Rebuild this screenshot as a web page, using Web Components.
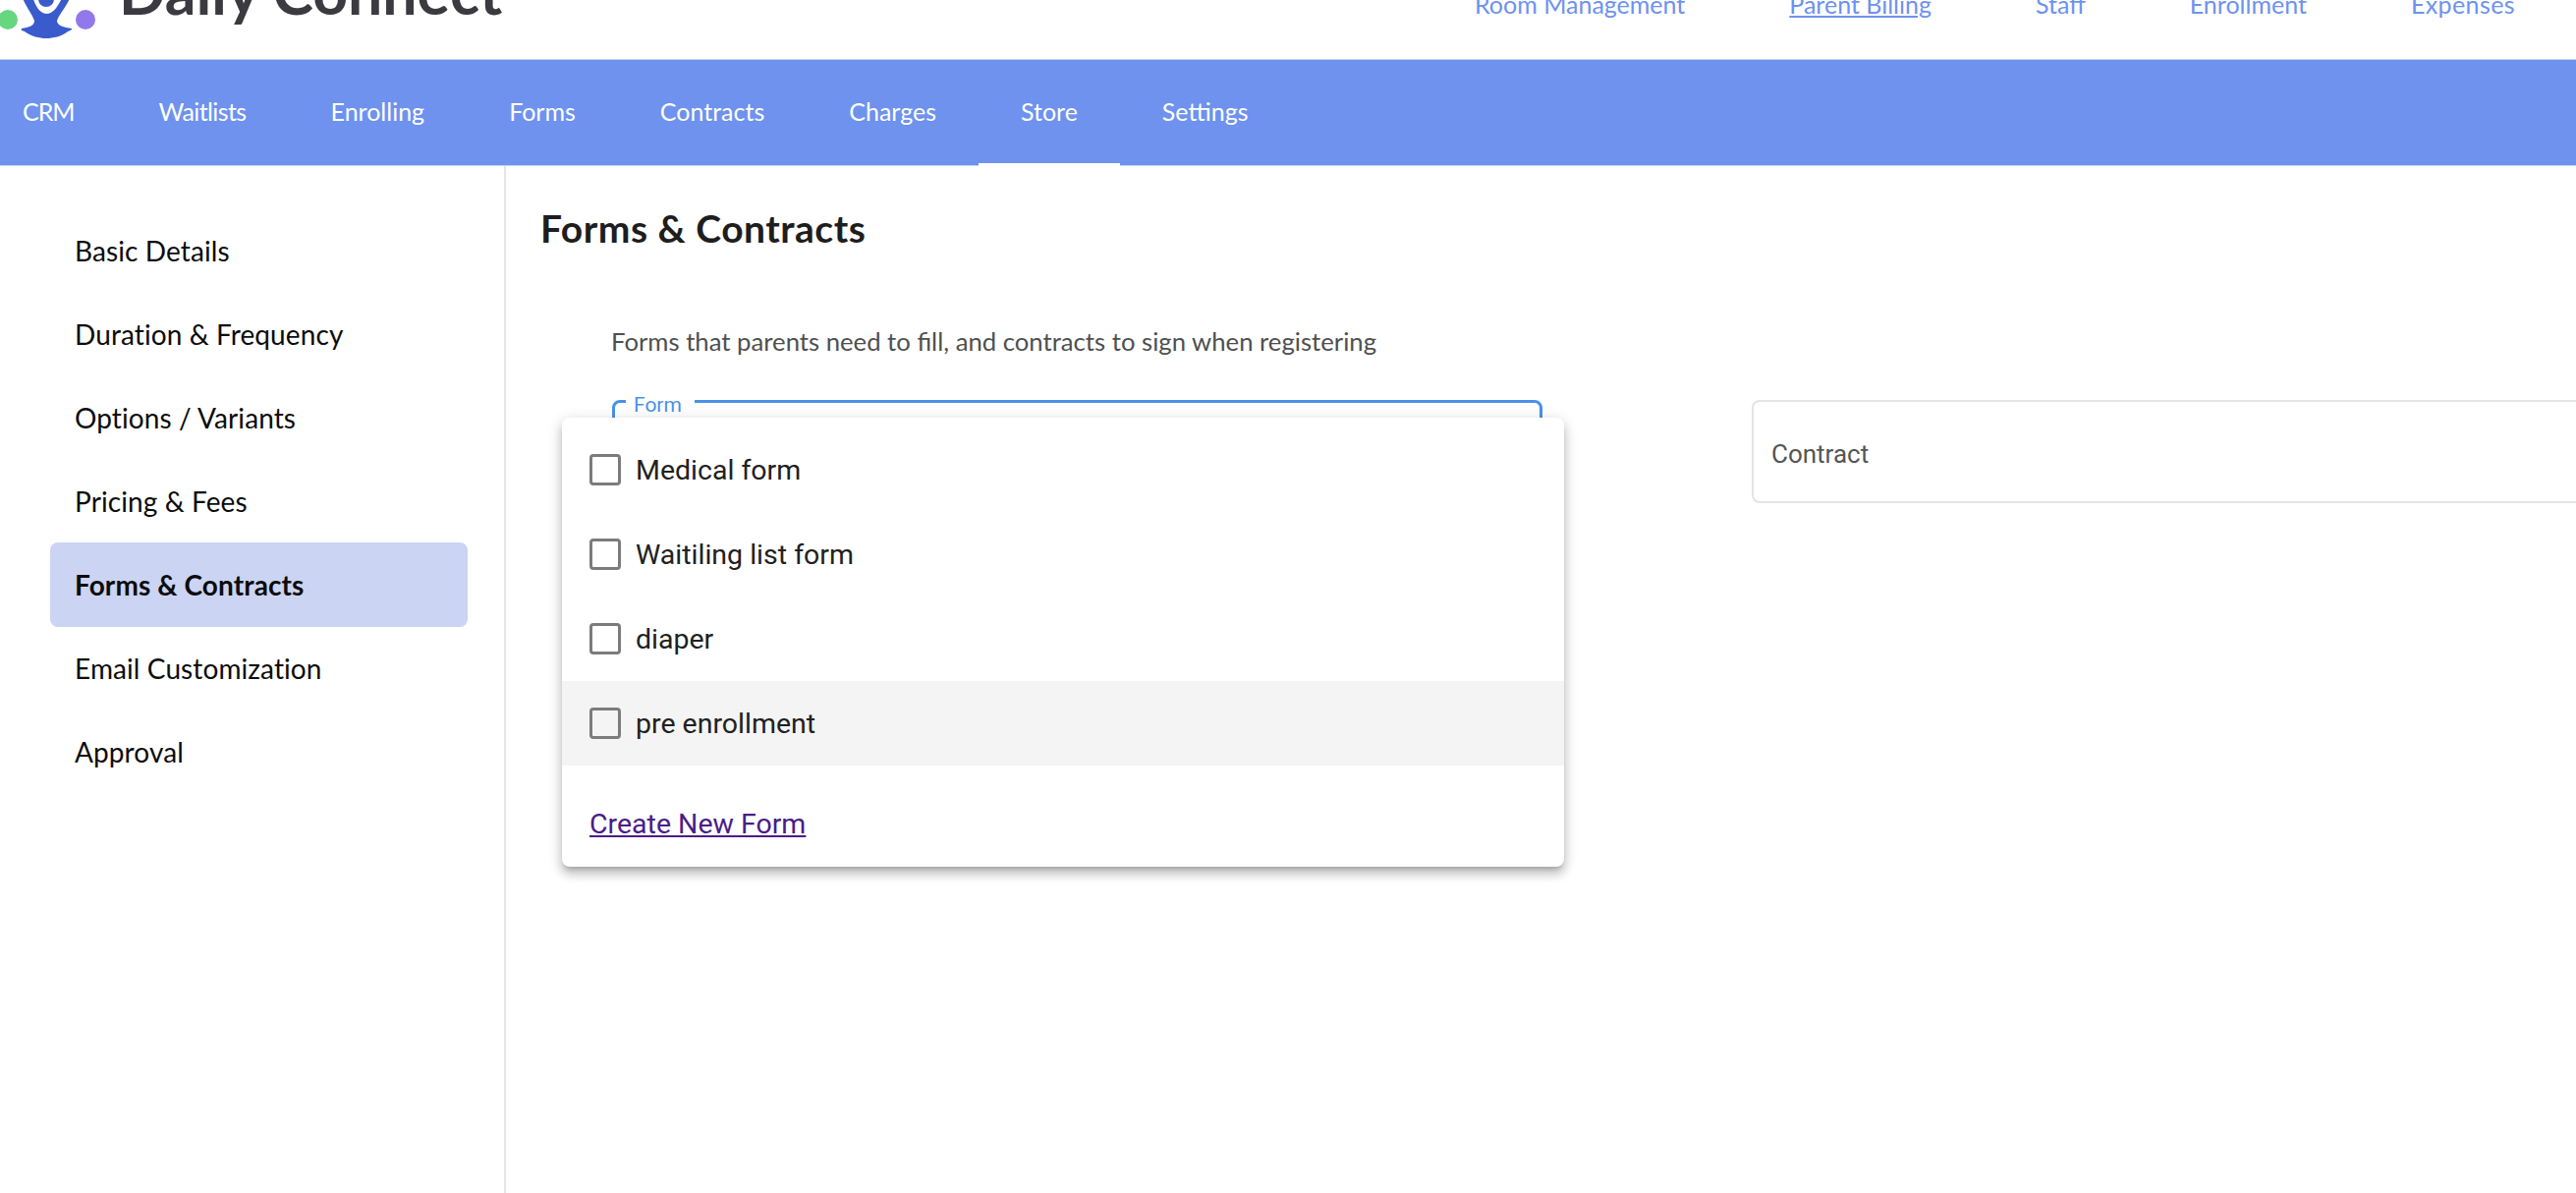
<!DOCTYPE html>
<html lang="en">
<head>
<meta charset="utf-8">
<title>Daily Connect</title>
<style>
  html, body { margin: 0; height: 100%; background: #fff; overflow: hidden; }
  body { font-family: Lato, "Open Sans", sans-serif; display: flex; flex-direction: column; }
</style>
</head>
<body>
<dc-header>
  <dc-top-link>Room Management</dc-top-link>
  <dc-top-link active>Parent Billing</dc-top-link>
  <dc-top-link>Staff</dc-top-link>
  <dc-top-link>Enrollment</dc-top-link>
  <dc-top-link style="letter-spacing: .4px">Expenses</dc-top-link>
</dc-header>
<dc-nav>
  <dc-nav-item style="letter-spacing: -1px">CRM</dc-nav-item>
  <dc-nav-item style="letter-spacing: -.6px">Waitlists</dc-nav-item>
  <dc-nav-item>Enrolling</dc-nav-item>
  <dc-nav-item>Forms</dc-nav-item>
  <dc-nav-item>Contracts</dc-nav-item>
  <dc-nav-item>Charges</dc-nav-item>
  <dc-nav-item active>Store</dc-nav-item>
  <dc-nav-item>Settings</dc-nav-item>
</dc-nav>
<dc-layout>
  <dc-side-menu slot="side">
    <dc-side-item>Basic Details</dc-side-item>
    <dc-side-item>Duration &amp; Frequency</dc-side-item>
    <dc-side-item>Options / Variants</dc-side-item>
    <dc-side-item>Pricing &amp; Fees</dc-side-item>
    <dc-side-item active>Forms &amp; Contracts</dc-side-item>
    <dc-side-item>Email Customization</dc-side-item>
    <dc-side-item>Approval</dc-side-item>
  </dc-side-menu>
  <dc-forms-page heading="Forms &amp; Contracts" description="Forms that parents need to fill, and contracts to sign when registering">
    <dc-select-field label="Form">
      <dc-dropdown link="Create New Form">
        <dc-check-row>Medical form</dc-check-row>
        <dc-check-row>Waitiling list form</dc-check-row>
        <dc-check-row>diaper</dc-check-row>
        <dc-check-row hover>pre enrollment</dc-check-row>
      </dc-dropdown>
    </dc-select-field>
    <dc-contract-field>Contract</dc-contract-field>
  </dc-forms-page>
</dc-layout>

<script>
(function () {
  function define(name, css, html) {
    class El extends HTMLElement {
      constructor() {
        super();
        this.attachShadow({ mode: 'open' });
        const body = typeof html === 'function' ? html(this) : html;
        this.shadowRoot.innerHTML = `<style>${css}</style>${body}`;
      }
    }
    customElements.define(name, El);
  }

  define('dc-header', `
    :host { display: flex; height: 60px; flex: none; overflow: hidden; align-items: flex-end; background: #fff; }
    svg { flex: none; display: block; }
    .brand {
      margin: 0 0 38px 24px;
      font-size: 62.5px;
      line-height: 1;
      font-weight: 700;
      color: #3a3a40;
      white-space: nowrap;
    }
    .links { margin-left: auto; display: flex; gap: 106px; padding: 0 62px 41px 0; }
  `, `
    <svg width="97" height="60" viewBox="0 0 97 60">
      <circle cx="8" cy="20" r="10" fill="#66d67f"/>
      <circle cx="87" cy="20" r="10" fill="#9378ec"/>
      <path d="M22 -4 C27 8 33 15 35 21 C35 26 30 28 22 29 C21 31 23 31 25 32 C32 37 40 39 47 39 C54 39 63 37 69 32 C71 31 74 30 73 29 C65 28 58 26 58 21 C60 15 67 8 72 -4 Z" fill="#3a5bcc"/>
      <path d="M33 -4 C36 7 41 14 47.5 14 C54 14 59 7 64 -4 Z" fill="#fff"/>
      <circle cx="47" cy="-1" r="8" fill="#3a5bcc"/>
    </svg>
    <div class="brand">Daily Connect</div>
    <div class="links"><slot></slot></div>
  `);

  define('dc-top-link', `
    :host { display: block; font-size: 25px; line-height: 30px; color: #6e92ee; white-space: nowrap; }
    :host([active]) { text-decoration: underline; }
  `, `<slot></slot>`);

  define('dc-nav', `
    :host {
      display: flex;
      flex: none;
      height: 109px;
      box-sizing: border-box;
      background: #6e92ee;
      border-top: 1px solid #c3d1f7;
      border-bottom: 1px solid #c3d1f7;
    }
    .items { display: flex; margin-left: -20px; height: 109px; margin-top: -1px; }
  `, `<div class="items"><slot></slot></div>`);

  define('dc-nav-item', `
    :host {
      display: flex;
      align-items: center;
      box-sizing: border-box;
      height: 109px;
      padding: 0 43px;
      font-size: 25px;
      color: #fff;
      white-space: nowrap;
      border-bottom: 3px solid transparent;
    }
    :host([active]) { border-bottom-color: #fff; }
  `, `<slot></slot>`);

  define('dc-layout', `
    :host { display: flex; flex: 1; min-height: 0; }
    .side { flex: none; width: 515px; box-sizing: border-box; border-right: 2px solid #e6e6e6; }
    .main { flex: 1; min-width: 0; }
  `, `
    <div class="side"><slot name="side"></slot></div>
    <div class="main"><slot></slot></div>
  `);

  define('dc-side-menu', `
    :host { display: flex; flex-direction: column; padding: 44px 0 0 51px; width: 425px; }
  `, `<slot></slot>`);

  define('dc-side-item', `
    :host {
      display: flex;
      align-items: center;
      height: 84.75px;
      padding-left: 25px;
      border-radius: 8px;
      font-size: 28px;
      letter-spacing: .1px;
      color: #0c0c0c;
      white-space: nowrap;
    }
    :host([active]) { background: #cbd4f2; font-weight: 700; height: 86px; }
  `, `<slot></slot>`);

  define('dc-forms-page', `
    :host { display: block; padding: 41px 0 0 36px; overflow: hidden; height: 100%; box-sizing: border-box; }
    h1 { margin: 0 0 0 -1px; font-size: 39px; line-height: 44px; letter-spacing: .5px; font-weight: 700; color: #1e1e1e; }
    p { margin: 0; padding: 75px 0 0 71px; font-size: 25.7px; line-height: 36px; color: #4f4f4f; }
    .fields { display: flex; gap: 213px; padding: 42px 0 0 72px; align-items: flex-start; }
  `, (el) => `
    <h1>${el.getAttribute('heading').replace('&', '&amp;')}</h1>
    <p>${el.getAttribute('description')}</p>
    <div class="fields"><slot></slot></div>
  `);

  define('dc-select-field', `
    :host {
      display: block;
      position: relative;
      flex: none;
      width: 947px;
      height: 105px;
      box-sizing: border-box;
      border: 3px solid #4a90e8;
      border-radius: 8px;
    }
    .label {
      position: absolute;
      left: 11px;
      top: -11px;
      padding: 0 13px 0 8px;
      font: 21px/26px Roboto, sans-serif;
      color: #4a90e8;
      background: #fff;
    }
  `, (el) => `<span class="label">${el.getAttribute('label')}</span><slot></slot>`);

  define('dc-dropdown', `
    :host {
      display: block;
      position: absolute;
      left: -54px;
      top: 15px;
      z-index: 2;
      width: 1020px;
      height: 457px;
      box-sizing: border-box;
      padding-top: 10px;
      border-radius: 8px;
      background: #fff;
      box-shadow: 0 5px 5px -3px rgba(0,0,0,.2), 0 8px 10px 1px rgba(0,0,0,.14), 0 3px 14px 2px rgba(0,0,0,.12);
    }
    .foot { padding: 43px 0 0 28px; }
    a { font: 28.5px/34px Roboto, sans-serif; color: #4a1c89; text-decoration: underline; }
  `, (el) => `
    <slot></slot>
    <div class="foot"><a href="#">${el.getAttribute('link')}</a></div>
  `);

  define('dc-check-row', `
    :host {
      display: flex;
      align-items: center;
      gap: 15px;
      height: 86px;
      padding-left: 28px;
      font: 28.5px Roboto, sans-serif;
      color: #212121;
    }
    :host([hover]) { background: #f4f4f4; }
    .box { width: 32px; height: 32px; box-sizing: border-box; border: 3px solid #7c7c7c; border-radius: 4px; flex: none; }
  `, `<span class="box"></span><slot></slot>`);

  define('dc-contract-field', `
    :host {
      display: flex;
      align-items: center;
      flex: none;
      width: 947px;
      height: 105px;
      box-sizing: border-box;
      padding: 4px 0 0 18px;
      border: 2px solid #e4e4e4;
      border-radius: 8px;
      font: 26px Roboto, sans-serif;
      color: #555;
    }
  `, `<slot></slot>`);
})();
</script>
</body>
</html>
